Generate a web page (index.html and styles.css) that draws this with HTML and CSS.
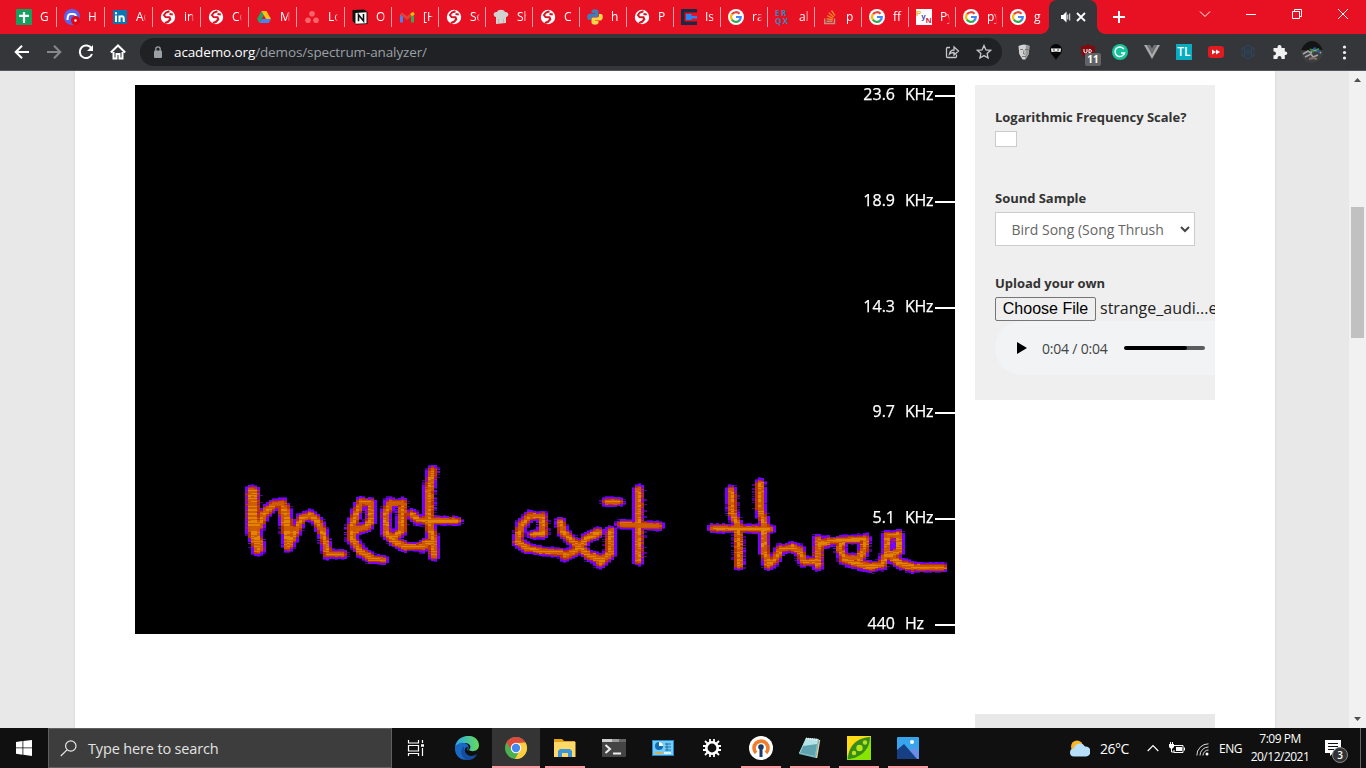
FILE: index.html
```html
<!DOCTYPE html>
<html lang="en">
<head>
<meta charset="utf-8">
<title>Spectrum Analyzer</title>
<link rel="stylesheet" href="styles.css">
</head>
<body>
<svg class="defs" aria-hidden="true">
  <symbol id="globe" viewBox="0 0 16 16"><circle cx="8" cy="8" r="7.2" fill="#fff"/><path d="M9.500 2.200 6 3.500 4 6l1.500 2 4 .3.800 2L8 12.800 5 14M12.800 5.500 9.500 5" fill="none" stroke="#d91424" stroke-width="2"/></symbol>
  <symbol id="google" viewBox="0 0 16 16"><circle cx="8" cy="8" r="8" fill="#fff"/><g fill="none" stroke-width="2.2"><path d="M4 5.4A4.8 4.8 0 0 1 11.5 4.7" stroke="#ea4335"/><path d="M4 5.2a4.8 4.8 0 0 0 0 5.6" stroke="#fbbc05"/><path d="M3.9 10.6a4.8 4.8 0 0 0 7.3 1" stroke="#34a853"/><path d="M8 8h4.8a4.8 4.8 0 0 1-1.8 3.7" stroke="#4285f4"/></g></symbol>
</svg>

<header class="tabs">
  <div class="tab first"><svg class="fav" viewBox="0 0 16 16"><rect width="16" height="16" rx="1" fill="#16a05d"/><path d="M8 3v11M3 6.8h10" stroke="#fff" stroke-width="2.2"/></svg><span>G</span></div>
  <div class="tab w48"><svg class="fav" viewBox="0 0 16 16"><circle cx="8" cy="8" r="8" fill="#5865f2"/><path d="M3.5 11c0-4 1-6 3-6h3c1.5 0 2.3 1 2.6 3" fill="none" stroke="#fff" stroke-width="2"/><circle cx="11.5" cy="11.5" r="4.5" fill="#e30613"/><circle cx="11.5" cy="11.5" r="1.2" fill="#fff"/></svg><span>H</span></div>
  <div class="tab w48"><svg class="fav" viewBox="0 0 16 16"><rect x="1" y="1" width="14" height="14" fill="#0a77b5"/><path d="M4 6.5V13M4 3.2v2M7.5 6.5V13M7.5 9c0-2.2 4.2-2.6 4.2 0v4" fill="none" stroke="#fff" stroke-width="2"/></svg><span>Ac</span></div>
  <div class="tab w48"><svg class="fav"><use href="#globe"/></svg><span>in</span></div>
  <div class="tab w48"><svg class="fav"><use href="#globe"/></svg><span>Co</span></div>
  <div class="tab w48"><svg class="fav" viewBox="0 0 16 16"><path d="M5.5 2 1 10l2.3 4L8 6z" fill="#22a565"/><path d="M5.5 2h5L15 10h-5z" fill="#fbc116"/><path d="M3.3 14 5.7 10H15l-2.3 4z" fill="#4285f4"/></svg><span>M</span></div>
  <div class="tab w48"><svg class="fav" viewBox="0 0 16 16" fill="#f8636b"><circle cx="8" cy="4.8" r="2.8"/><circle cx="4" cy="11.3" r="2.8"/><circle cx="12" cy="11.3" r="2.8"/></svg><span>Lo</span></div>
  <div class="tab"><svg class="fav" viewBox="0 0 16 16"><path d="M.5 1 12 .5 15.5 3v12L4 15.6.5 12z" fill="#111"/><path d="M3.5 4 14.5 3.3v10.9l-11 .6z" fill="#fff"/><path d="M6.5 12.3V5.7l5 6.2V5" fill="none" stroke="#111" stroke-width="1.6"/></svg><span>O</span></div>
  <div class="tab"><svg class="fav" viewBox="0 0 16 16" fill="none" stroke-width="3"><path d="M2.5 13.5V5" stroke="#4285f4"/><path d="M13.5 13.5V5" stroke="#34a853"/><path d="M2 4.5 8 9l6-4.5" stroke="#e33e33"/><path d="m12 6 3-2" stroke="#fbbc04"/></svg><span>[H</span></div>
  <div class="tab"><svg class="fav"><use href="#globe"/></svg><span>So</span></div>
  <div class="tab"><svg class="fav" viewBox="0 0 16 16"><path d="M3 15V8C-.5 7.500 0 2.500 4 3c1-3 7-3 8 0 4-.5 4.500 4.500 1 5v6z" fill="#d2d2cf"/><path d="M5.500 10v4M10.500 10v4" stroke="#bbb"/></svg><span>Sh</span></div>
  <div class="tab"><svg class="fav"><use href="#globe"/></svg><span>C</span></div>
  <div class="tab"><svg class="fav" viewBox="0 0 16 16"><path d="M4.500 4V2Q5 .3 8 .3T11.500 2v4.500Q11.500 8 10 8H6Q4.200 8 4.200 9.800V11H2Q.2 11 .2 8T2 4.700h6V4z" fill="#3d7fb8"/><path d="M11.500 12v2q-.5 1.700-3.500 1.700T4.500 14V9.700Q4.500 8.500 6 8.500h4Q12 8.500 12 6.500V5h2q1.800 0 1.800 3T14 11.500H8v.5z" fill="#ffd445"/></svg><span>h</span></div>
  <div class="tab"><svg class="fav"><use href="#globe"/></svg><span>P</span></div>
  <div class="tab"><svg class="fav" viewBox="0 0 16 16"><path d="M16 1.800H1.800v12.400H16" fill="none" stroke="#172b45" stroke-width="3.600"/><path d="M5 5h5.500v2H16v2.500h-5.500V11H5z" fill="#2787f5"/></svg><span>Is</span></div>
  <div class="tab"><svg class="fav"><use href="#google"/></svg><span>ra</span></div>
  <div class="tab"><div class="fav erqx"><b>ER</b><b>QX</b></div><span>al</span></div>
  <div class="tab"><svg class="fav" viewBox="0 0 16 16" fill="none"><path d="M2.700 9.500V14.500H12.500V9.500M4.500 12.300h6" stroke="#b99580" stroke-width="1.400"/><path d="m4.700 9.700 6 1M5.200 6.700l5.800 2.700M6.800 3.800l5 4.200M9.500 1.500l3.500 5.200" stroke="#f48024" stroke-width="1.400"/></svg><span>p</span></div>
  <div class="tab"><svg class="fav"><use href="#google"/></svg><span>ff</span></div>
  <div class="tab"><div class="fav pyn"><b>P</b><b>y</b><b>N</b></div><span>Py</span></div>
  <div class="tab"><svg class="fav"><use href="#google"/></svg><span>py</span></div>
  <div class="tab"><svg class="fav"><use href="#google"/></svg><span>g</span></div>
  <div class="tab-active">
    <svg width="28" height="14" viewBox="0 0 28 14"><path d="M1 5h2l3.500-3.500v11L3 9H1z" fill="#fff"/><path d="M7.800 4.500v5M9.700 3.500v7" stroke="#fff" stroke-width=".9"/><path d="m17 3 8 8m0-8-8 8" stroke="#fff" stroke-width="1.800"/></svg>
  </div>
  <svg class="plus" viewBox="0 0 12 12"><path d="M6 0v12M0 6h12" stroke="#fff" stroke-width="2"/></svg>
  <div class="controls">
    <svg width="12" height="12" viewBox="0 0 12 12"><path d="m1 3.500 5 5 5-5"/></svg>
    <svg width="12" height="12" viewBox="0 0 12 12"><path d="M1 6.500h10"/></svg>
    <svg width="12" height="12" viewBox="0 0 12 12"><path d="M1.500 3.500h7v7h-7zM3.500 3V1.500h7v7H9"/></svg>
    <svg width="12" height="12" viewBox="0 0 12 12"><path d="m1 1 10 10m0-10L1 11"/></svg>
  </div>
</header>

<nav class="toolbar">
  <div class="navs">
    <svg viewBox="0 0 16 16"><path d="M15 8H2m6-6.300L1.700 8 8 14.300" stroke="#fff"/></svg>
    <svg viewBox="0 0 16 16"><path d="M1 8h13M8 1.700 14.300 8 8 14.300" stroke="#87888b"/></svg>
    <svg viewBox="0 0 16 16"><path d="M13.500 4.500A6.300 6.300 0 1 0 14 10" stroke="#fff"/><path d="M15 1v6H9z" fill="#fff" stroke="none"/></svg>
    <svg viewBox="0 0 16 16"><path d="M3.500 8v6.500h3V10h3v4.500h3V8M.8 8.500 8 1.500l7.200 7" stroke="#fff"/></svg>
  </div>
  <div class="omnibox">
    <svg class="lock" viewBox="0 0 8 12"><rect y="4.500" width="8" height="7.500" rx="1" fill="#9aa0a6"/><path d="M1.800 5V3a2.200 2.200 0 0 1 4.400 0v2" fill="none" stroke="#9aa0a6" stroke-width="1.300"/></svg>
    <div class="url"><b>academo.org</b>/demos/spectrum-analyzer/</div>
    <svg class="obi" viewBox="0 0 16 16"><path d="M6 3.500H3.500q-1 0-1 1v8q0 1 1 1h8q1 0 1-1V10.500M5.500 10c.5-3 2-4 4.500-4V3L14.500 7 10 11V8.500c-2 0-3.200.2-4.500 1.500z"/></svg>
    <svg class="obi" viewBox="0 0 16 16"><path d="m8 1.500 1.900 4.300 4.700.5-3.500 3.100 1 4.600L8 11.600 3.900 14l1-4.600L1.400 6.300l4.700-.5z"/></svg>
  </div>
  <div class="ext">
    <svg viewBox="0 0 16 16"><path d="M2.500 2Q8-1 13.500 2l-.8 8L9.500 15.500h-3L3.200 10z" fill="#d2d2d2"/><path d="M10 .8l3.500 1.200-.8 8-3 5H9z" fill="#999"/><path d="M4 5.500h3m2 0h3.500M8 6l-.5 4H9M6 12.500h4" stroke="#666" stroke-width=".8" fill="none"/></svg>
    <svg viewBox="0 0 16 16"><path d="M8 0a6 6 0 0 1 6 6c0 4-4 6-6 10-2-4-6-6-6-10a6 6 0 0 1 6-6" fill="#050505"/><path d="M3 4.500h10L12.500 8 8 7.500 3.500 8z" fill="#fff"/><path d="M4.800 6h2m2.400 0h2" stroke="#222"/></svg>
    <div class="ub"><svg viewBox="0 0 16 16"><path d="M8 0c2 1.500 4 2 7 2 0 7 0 10-7 14C1 12 1 9 1 2c3 0 5-.5 7-2" fill="#800b10"/><path d="M4 5v3q1.500 1.800 3 0V5m2 4V5.500h1.500q2 1.500 0 3H9" fill="none" stroke="#fff"/></svg><i>11</i></div>
    <svg viewBox="0 0 16 16"><circle cx="8" cy="8" r="8" fill="#15c39a"/><path d="M11.800 5A4.800 4.800 0 1 0 12.500 9H9" fill="none" stroke="#fff" stroke-width="1.500"/></svg>
    <svg viewBox="0 0 16 16"><path d="M0 1h3l5 9 5-9h3L8 15z" fill="#aaa"/><path d="M3 1h3.200L8 4.500 9.800 1H13l-5 9z" fill="#717376"/></svg>
    <div class="tl">TL</div>
    <svg viewBox="0 0 16 16"><rect y="2" width="16" height="12" rx="3" fill="#df1b20"/><path d="m4 5.500 4 2.500-4 2.500zm4 0 4 2.500-4 2.500z" fill="#fff"/></svg>
    <svg viewBox="0 0 16 16" fill="none" stroke="#294765" stroke-width=".8"><path d="m8 1 6 3.500v7L8 15l-6-3.500v-7zM2 4.500l12 7m0-7-12 7M8 1v14M4.500 3v10m7-10v10"/></svg>
    <svg viewBox="0 0 16 16"><path d="M1.500 4h4V3a2 2 0 0 1 4 0v1h3.300v3.500h.7a1.800 1.800 0 0 1 0 3.600h-.7V15H9.500v-1a2 2 0 0 0-4 0v1h-4v-3.700h1a1.900 1.900 0 0 0 0-3.700h-1z" fill="#f1f1f1"/></svg>
    <svg class="avatar" viewBox="0 0 22 22"><circle cx="11" cy="11" r="11" fill="#3c3e3f"/><path d="M0 9q4-9 11-9t11 9l-8-1-6 2z" fill="#141414"/><path d="m2 13 5-3 3 2 2-3 5 1 3 2M4 16l6-3 2 3 5-2" stroke="#a3a4a6" stroke-width="1.600" fill="none"/><path d="m8 18 4-1 4 1" stroke="#88706a" stroke-width="2" fill="none"/><path d="m9 8 4 3m5-3-3 1" stroke="#3b8b3d" stroke-width="2"/><path d="m12 8 3-1m1 3 3 1" stroke="#2452a6" stroke-width="2"/></svg>
    <svg viewBox="0 0 16 16" fill="#f1f1f1"><circle cx="8.500" cy="3" r="1.600"/><circle cx="8.500" cy="8.500" r="1.600"/><circle cx="8.500" cy="14" r="1.600"/></svg>
  </div>
</nav>

<main class="viewport">
  <div class="sheet">
    <section class="spectrum">
      <canvas id="plot" width="820" height="549"></canvas>
      <div class="axis">
        <div><span>23.6</span><em>KHz</em><hr></div>
        <div><span>18.9</span><em>KHz</em><hr></div>
        <div><span>14.3</span><em>KHz</em><hr></div>
        <div><span>9.7</span><em>KHz</em><hr></div>
        <div><span>5.1</span><em>KHz</em><hr></div>
        <div><span>440</span><em>Hz</em><hr></div>
      </div>
    </section>
    <aside class="side">
      <div class="panel">
        <label>Logarithmic Frequency Scale?</label>
        <div class="check"></div>
        <label class="l2">Sound Sample</label>
        <div class="select"><span>Bird Song (Song Thrush</span><svg width="10" height="7" viewBox="0 0 10 7"><path d="m1 1 4 4 4-4" fill="none" stroke="#444" stroke-width="2"/></svg></div>
        <label class="l3">Upload your own</label>
        <div class="file"><div class="choose">Choose File</div><span>strange_audi...e</span></div>
        <div class="audio"><svg width="10" height="12" viewBox="0 0 10 12"><path d="M0 0v12l10-6z"/></svg><span>0:04 / 0:04</span><div class="track"><div class="played"></div></div></div>
      </div>
      <div class="panel-next"></div>
    </aside>
  </div>
  <div class="scroll">
    <svg width="7" height="4" viewBox="0 0 7 4"><path d="M0 4 3.500 0 7 4z" fill="#505050"/></svg>
    <div class="thumb"></div>
    <svg width="7" height="4" viewBox="0 0 7 4"><path d="M0 0h7L3.500 4z" fill="#505050"/></svg>
  </div>
</main>

<footer class="taskbar">
  <div class="start"><svg width="16" height="16" viewBox="0 0 16 16" fill="#fff"><path d="M0 2l6.500-.9v6.400H0zM7.300 1 16 0v7.500H7.300zM0 8.300h6.500v6.400L0 13.800zM7.300 8.300H16V16l-8.700-1.200z"/></svg></div>
  <div class="search"><svg width="17" height="17" viewBox="0 0 17 17" fill="none" stroke="#e8e8e8" stroke-width="1.200"><circle cx="10.800" cy="6" r="5.200"/><path d="M7 9.800.8 16"/></svg><span>Type here to search</span></div>
  <div class="view"><svg width="18" height="18" viewBox="0 0 18 18" fill="none" stroke="#fff" stroke-width="1.200"><path d="M1.500 1v3h10V1M1.500 17v-2.500h10V17M1.500 6.500h10v5.500h-10zM15.500 1v3M15.500 9v8"/><path d="M14 6.500h3" stroke-width="2.500"/></svg></div>
  <div class="apps">
    <div><svg viewBox="0 0 24 24"><defs><linearGradient id="eg"><stop stop-color="#2aa8ed"/><stop offset="1" stop-color="#65db55"/></linearGradient></defs><path d="M0 11C2-3 23-4 24 9c0 7-8 7-10 5 3-3 1-7-4-7-4 0-8 2-10 4" fill="url(#eg)"/><path d="M0 11q4-5 9-4c6 1 5 6 4 8-1-1-1-2 0-4-5 0-4 8 1 9 3 1 6 0 8-2C16 27-1 26 0 11" fill="#1769c4"/><path d="M9 10c-6 6-1 14 5 14 4-.5 6-2 8-6-6 4-13 2-13-8" fill="#154c9e"/></svg></div>
    <div class="on"><svg viewBox="0 0 24 24"><circle cx="12" cy="12" r="11" fill="#4caf50"/><path d="M2.500 6.500a11 11 0 0 1 19 0L12 8l-5 5z" fill="#dc4b3e"/><path d="M21.500 6.500A11 11 0 0 1 11 23l5-9-4-7z" fill="#ffcd40"/><circle cx="12" cy="12" r="5.200" fill="#fff"/><circle cx="12" cy="12" r="4.200" fill="#4688f1"/></svg></div>
    <div class="run"><svg viewBox="0 0 24 24"><path d="M1 3h8l2 2h11v15H1z" fill="#e7a114"/><rect x="1" y="6" width="21.500" height="15" fill="#ffd868"/><path d="M5 21v-6l2-2h10l2 2v6h-4v-4H9v4z" fill="#3b96d9"/></svg></div>
    <div><svg viewBox="0 0 24 24"><rect y="3" width="24" height="18" rx="1" fill="#444"/><path d="M0 3h10v3H0z" fill="#d0d0d0"/><path d="M10 3h7v3h-7z" fill="#999"/><path d="M17 3h7v3h-7z" fill="#666"/><path d="m3.500 9 4.500 4-4.500 4M11 17.500h8" fill="none" stroke="#eee" stroke-width="2"/></svg></div>
    <div><svg viewBox="0 0 24 24"><rect x="1.500" y="4.500" width="21" height="15" fill="#74cdf7" stroke="#2487c9"/><circle cx="8" cy="10" r="4" fill="#116bb5"/><path d="M8 10V6a4 4 0 0 1 4 4z" fill="#fff"/><path d="M14 8h6m-6 3h6m-6 3h6M16 7v8" stroke="#2372a4"/><path d="M4 17h8" stroke="#f5a623" stroke-width="1.500"/><path d="M13 17h7" stroke="#fff" stroke-width="1.500"/></svg></div>
    <div><svg viewBox="0 0 24 24" fill="none" stroke="#fff"><circle cx="12" cy="12" r="5.700" stroke-width="2.600"/><path d="M10 3v4m4-4v4m-4 10v4m4-4v4M3 10h4m-4 4h4m10-4h4m-4 4h4M5 5l3 3m8 8 3 3M5 19l3-3m8-8 3-3" stroke-width="1.800"/></svg></div>
    <div class="run"><svg viewBox="0 0 24 24"><circle cx="12" cy="12" r="12" fill="#fff"/><path d="M7 17a7 7 0 1 1 10 0" fill="none" stroke="#ee7e2d" stroke-width="3.600"/><circle cx="12" cy="11" r="2.800" fill="#1a3967"/><path d="M10.500 12h3v9h-3z" fill="#1a3967"/></svg></div>
    <div class="run"><svg viewBox="0 0 24 24"><path d="m8 2 13 1-3 19-17-4z" fill="#78b6c2"/><path d="m8 2 12 1-3 17L1 17z" fill="#b4e4e8"/><path d="m5 10 14-2-2 12-15-3z" fill="#5fa3af"/><path d="M8 2.500 20 4" stroke="#eee" stroke-width="2" stroke-dasharray="1 1"/><path d="m21.500 4-3 18" stroke="#ddd8ac" stroke-width="1.500"/></svg></div>
    <div class="run"><svg viewBox="0 0 24 24"><path d="M0 0h24v24H0z" fill="#89e400"/><path d="M0 0h24L0 20z" fill="#ffda17"/><path d="M1 23C1 12 8 2 23 1c0 12-9 21-22 22" fill="#398c19"/><g fill="#b8e51a"><circle cx="7" cy="17" r="2.200"/><circle cx="12.500" cy="12" r="3.200"/><circle cx="18" cy="6.500" r="2.200"/></g></svg></div>
    <div class="run"><svg viewBox="0 0 24 24"><rect x="1" y="1" width="22" height="22" rx="1" fill="#38a4ed"/><path d="m12 16 6-5 5 5v7H12z" fill="#698de8"/><path d="m1 14 7-6 13 15H1z" fill="#173f83"/><circle cx="16" cy="6" r="2" fill="#fff"/></svg></div>
  </div>
  <div class="tray">
    <svg class="weather" viewBox="0 0 20 17"><circle cx="7" cy="6.500" r="6" fill="#f7b527"/><path d="M4 16.500a4 4 0 0 1 0-8 6 6 0 0 1 11-2 5 5 0 0 1 1 10z" fill="#b9e0fa"/></svg>
    <span class="temp">26°C</span>
    <svg class="chev" viewBox="0 0 12 8"><path d="m.7 7 5.300-5.500L11.300 7" fill="none" stroke="#fff" stroke-width="1.200"/></svg>
    <svg class="bat" viewBox="0 0 16 12"><path d="M5 3.500h9v7H5V8M15.500 5.500v3" fill="none" stroke="#fff"/><path d="M7 5h6v4H7zM0 2h5v3L3.500 6.500h-2L0 5z" fill="#fff"/><path d="M1.500 0v3m2-3v3M2.500 6v4H5" stroke="#fff" fill="none"/></svg>
    <svg class="wifi" viewBox="0 0 13 13" fill="none" stroke="#ddd"><path d="M.8 12.500A11.700 11.700 0 0 1 12.500.8M4 12.500A8.500 8.500 0 0 1 12.500 4M7 12.500a5.500 5.500 0 0 1 5.500-5.500"/><circle cx="11" cy="11" r="1.500" fill="#fff" stroke="none"/></svg>
    <span class="lang">ENG</span>
    <div class="clock"><span>7:09 PM</span><span>20/12/2021</span></div>
    <div class="note"><svg viewBox="0 0 16 16"><path d="M0 0h16v13H8l-3 3v-3H0z" fill="#fff"/><path d="M3 3.500h10M3 6.500h10M3 9.500h6" stroke="#111" stroke-width="1.200"/></svg><i>3</i></div>
  </div>
</footer>
<script src="plot.js"></script>
</body>
</html>
```
FILE: styles.css
```css
* { box-sizing: border-box; }
body { margin: 0; width: 1366px; height: 768px; overflow: hidden; display: flex; flex-direction: column; font-family: "Open Sans", "Noto Sans", sans-serif; background: #fff; }
svg { display: block; flex: none; }
.defs { position: absolute; width: 0; height: 0; }
i, em { font-style: normal; }

.tabs { height: 34px; flex: none; display: flex; background: #e81123; color: #fff; }
.tab { width: 47px; flex: none; display: flex; align-items: center; padding-left: 7px; border-left: 1px solid transparent; background: linear-gradient(#f5a0a7, #f5a0a7) -1px 7px / 1px 20px no-repeat border-box; background-origin: padding-box; }
.tab.w48 { width: 48px; }
.tab.first { width: 56px; padding-left: 15px; background: none; }
.tab span { font: 12px "Open Sans", sans-serif; margin-left: 8px; width: 10px; overflow: hidden; white-space: nowrap; line-height: 18px; -webkit-mask-image: linear-gradient(90deg, #000 70%, transparent); }
.fav { width: 16px; height: 16px; flex: none; }
.erqx { font: 8px/8px "Open Sans", sans-serif; color: #3b83b9; display: grid; letter-spacing: 1.5px; }
.erqx b { font-weight: 700; }
.pyn { background: #fff; display: flex; font: bold 8px/9px "Liberation Sans", sans-serif; color: #f4b729; }
.pyn b:nth-child(2) { color: #4747af; margin-top: 3px; }
.pyn b:nth-child(3) { color: #dc2037; margin-top: 7px; }
.tab-active { width: 48px; flex: none; background: #35363a; border-radius: 8px 8px 0 0; display: flex; align-items: center; padding: 0 0 0 11px; position: relative; }
.tab-active::before, .tab-active::after { content: ""; position: absolute; bottom: 0; width: 8px; height: 8px; }
.tab-active::before { left: -8px; background: radial-gradient(circle at 0 0, transparent 7.5px, #35363a 8px); }
.tab-active::after { right: -8px; background: radial-gradient(circle at 100% 0, transparent 7.5px, #35363a 8px); }
.plus { width: 12px; height: 12px; margin: 11px 0 0 16px; }
.controls { display: flex; gap: 34px; margin: 8px 0 0 74px; fill: none; stroke: #fff; stroke-width: 1; }

.toolbar { height: 37px; flex: none; background: #35363a; border-bottom: 1px solid #56575b; display: flex; align-items: center; }
.navs { display: flex; gap: 16px; padding-left: 14px; width: 140px; fill: none; stroke-width: 2; }
.navs svg { width: 16px; height: 16px; }
.omnibox { width: 862px; height: 28px; border-radius: 14px; background: #202124; display: flex; align-items: center; padding: 0 10px 0 14px; }
.lock { width: 8px; height: 12px; }
.url { margin-left: 12px; font-size: 13.500px; letter-spacing: -.12px; line-height: 20px; color: #9aa0a6; flex: 1; white-space: nowrap; }
.url b { color: #fff; font-weight: 400; }
.obi { width: 16px; height: 16px; margin-left: 16px; fill: none; stroke: #c4c6c9; stroke-width: 1.3; }
.ext { display: flex; align-items: center; gap: 16px; padding-left: 14px; }
.ext svg { width: 16px; height: 16px; }
.ext .avatar { width: 22px; height: 22px; margin: 0 -3px; }
.ub { position: relative; }
.ub i { position: absolute; left: 5px; top: 9px; width: 16px; height: 13px; background: #626365; border-radius: 2px; color: #fff; font: 700 10px/13px "Open Sans", sans-serif; text-align: center; }
.tl { width: 16px; height: 16px; background: #08adc2; color: #fff; font: 600 12px/16px "Open Sans", sans-serif; text-align: center; }

.viewport { height: 657px; flex: none; background: #e8e8e8; display: flex; overflow: hidden; }
.sheet { width: 1200px; margin-left: 75px; background: #fff; box-shadow: 0 0 2px #ccc; padding: 14px 60px 0; display: flex; gap: 20px; }
.spectrum { width: 820px; height: 549px; background: #000; position: relative; flex: none; }
#plot { display: block; }
.axis { position: absolute; right: 0; top: 0; height: 550px; width: 110px; display: flex; flex-direction: column; justify-content: space-between; color: #fff; }
.axis div { height: 21px; display: flex; font-size: 16px; font-weight: 500; line-height: 18px; -webkit-text-stroke: .25px #fff; }
.axis span { width: 50px; text-align: right; }
.axis em { width: 30px; margin-left: 10px; letter-spacing: -.3px; }
.axis hr { width: 20px; height: 2px; background: #fff; border: 0; margin: 10px 0 0; }
.side { width: 240px; flex: none; }
.panel { height: 315px; background: #efefef; overflow: hidden; padding: 23px 0 0 20px; }
.panel label { display: block; font-size: 13px; line-height: 18px; font-weight: 700; color: #333; white-space: nowrap; letter-spacing: -.03px; }
.check { width: 22px; height: 16px; margin-top: 5px; background: #fff; border: 1px solid #ccc; }
.panel .l2 { margin-top: 42px; }
.select { width: 200px; height: 34px; margin-top: 5px; background: #fff; border: 1px solid #ccc; padding: 0 4px 0 15.500px; display: flex; align-items: center; justify-content: space-between; font-size: 14px; color: #666; white-space: nowrap; }
.panel .l3 { margin-top: 28px; }
.file { display: flex; margin-top: 5px; height: 24px; gap: 4px; white-space: nowrap; font-size: 16px; line-height: 23px; color: #222; }
.choose { width: 101px; flex: none; height: 24px; border: 1px solid #767676; border-radius: 2px; font: 16px/22px "Liberation Sans", sans-serif; color: #000; text-align: center; }
.audio { width: 300px; height: 54px; border-radius: 27px; background: #f1f3f4; display: flex; align-items: center; padding-left: 22px; }
.audio span { margin-left: 15px; width: 67px; font-size: 14px; letter-spacing: -.2px; color: #444; white-space: nowrap; }
.track { width: 81px; height: 4px; border-radius: 2px; background: #5c5c5c; margin-left: 15px; overflow: hidden; }
.played { width: 63px; height: 4px; background: #000; border-radius: 2px; }
.panel-next { margin-top: 314px; height: 20px; background: #e8e8e8; }
.scroll { width: 17px; margin-left: 74px; background: #f1f1f1; display: flex; flex-direction: column; align-items: center; padding: 7px 0; }
.thumb { width: 13px; height: 131px; margin: 125px 0 auto; background: #c1c1c1; }

.taskbar { height: 40px; flex: none; background: #101010; display: flex; color: #fff; }
.start, .view { width: 48px; display: flex; align-items: center; justify-content: center; }
.search { width: 344px; border: 1px solid #606060; background: #3d3d3d; display: flex; align-items: center; gap: 11px; padding-left: 11px; font-size: 14.500px; letter-spacing: -.15px; color: #e3e3e3; }
.apps { display: flex; margin-left: 4px; gap: 1px; }
.apps div { width: 48px; height: 40px; display: flex; align-items: center; justify-content: center; }
.apps svg { width: 24px; height: 24px; margin-left: -3px; }
.apps .run { background: linear-gradient(#ff9aa2, #ff9aa2) 3px 38px / 40px 2px no-repeat; }
.apps .on { background: #343434; border-bottom: 2px solid #ff9aa2; margin-left: -1px; width: 48px; margin-right: 1px; }
.apps .on svg { margin: 2px 0 0; }
.tray { margin-left: auto; width: 297px; display: flex; align-items: center; border-right: 5px solid #101010; box-shadow: inset -1px 0 #666; }
.weather { width: 20px; height: 17px; margin-left: 1px; }
.temp { font-size: 14px; letter-spacing: -.5px; margin-left: 10px; width: 37px; }
.chev { width: 12px; height: 8px; margin-left: 10px; }
.bat { width: 16px; height: 12px; margin-left: 10px; }
.wifi { width: 13px; height: 13px; margin: 3px 0 0 11px; }
.lang { font-size: 12px; width: 26px; margin-left: 10px; letter-spacing: -.5px; }
.clock { width: 66px; margin-left: 2px; margin-right: 2px; display: flex; flex-direction: column; align-items: center; font-size: 12px; line-height: 18px; letter-spacing: -.5px; white-space: nowrap; }
.note { position: relative; margin-left: 10px; }
.note svg { width: 16px; height: 16px; }
.note i { position: absolute; left: 7px; top: 7px; width: 16px; height: 16px; border-radius: 50%; background: #333; border: 1px solid #888; font: 600 10px/14px "Open Sans", sans-serif; text-align: center; }
```
FILE: plot.js
```js
// Strokes of the spectrogram trace, three units per canvas pixel.
const groups = [
  { x: 100, y: 370, lines: [
    [48,108,48,215,68,285], [58,110,60,215,75,280],
    [70,215,88,175,118,148,142,145,150,210,160,275,180,235,200,190,225,180,245,195,262,230,272,265,280,297,322,298],
    [152,160,165,240],
    [365,225,395,215,408,195,408,145,380,140,362,180,350,215,350,250,380,292,410,310,445,315],
    [500,225,502,145,465,144,452,175,455,235,475,257,510,275,560,275,580,262],
    [480,245,498,228],
    [530,178,550,195,665,198], [592,48,583,100,582,200,594,255,597,300] ] },
  { x: 365, y: 385, lines: [
    [98,194,130,190,128,140,90,138,64,165,52,215,80,234,130,244,185,248],
    [182,158,188,185,230,225,270,258,310,270], [295,188,260,205,230,240,195,258],
    [332,185,330,250,300,278], [322,96,356,96], [415,60,415,270], [365,163,410,165,475,168] ] },
  { x: 565, y: 385, lines: [
    [94,62,97,130,115,170,117,285], [40,175,210,177],
    [180,42,180,110,192,160,192,240,206,285,222,272,242,238,275,232,300,240,310,275,345,275],
    [355,210,354,285], [357,225,385,214,430,210,495,207,492,240,480,265,432,262,420,235,430,212],
    [432,268,465,280,515,290,545,285,560,250,563,197,595,195,597,240,570,258],
    [565,255,600,280,640,292,730,292] ] }
];
const segs = [];
for (const g of groups) for (const l of g.lines)
  for (let i = 0; i + 3 < l.length; i += 2)
    segs.push([g.x + l[i] / 3, g.y + l[i + 1] / 3, g.x + l[i + 2] / 3, g.y + l[i + 3] / 3]);

const hash = (a, b) => { const v = Math.sin(a * 127.1 + b * 311.7) * 43758.5453; return v - Math.floor(v); };

// Flat segments are drawn slimmer than upright ones.
function near(px, py) {
  let best = 1e9;
  for (const [x1, y1, x2, y2] of segs) {
    const dx = x2 - x1, dy = y2 - y1;
    const qx = px - x1, qy = py - y1;
    const len2 = dx * dx + dy * dy;
    const t = Math.max(0, Math.min(1, (qx * dx + qy * dy) / len2));
    const flat = Math.abs(dy) < Math.abs(dx) * .2 ? 1.25 : 1;
    best = Math.min(best, Math.hypot(qx - t * dx, (qy - t * dy) * flat));
  }
  return best;
}
const ctx = document.getElementById('plot').getContext('2d');
for (let x = 101; x < 812; x += 3) {
  for (let y = 370; y < 500; y++) {
    const d = near(x + 1.5, y + .5) + (hash(x, y) - .5) * .8 + (hash(x, 7) - .5) * .7;
    let c = null;
    if (d < 1.5) c = hash(y, x > 480 ? 3 : 5) > .45 ? '#df8500' : '#d05c00';
    else if (d < 3) c = hash(y, 11) > .8 ? '#df7400' : '#cc5500';
    else if (d < 4) c = '#b93400';
    else if (d < 4.4) c = '#9a1293';
    else if (d < 5.9) c = '#7800ff';
    else if (d < 6.8 && hash(y, x) > .4) c = '#4b009c';
    if (c) { ctx.fillStyle = c; ctx.fillRect(x, y, 3, 1); }
  }
}
```
